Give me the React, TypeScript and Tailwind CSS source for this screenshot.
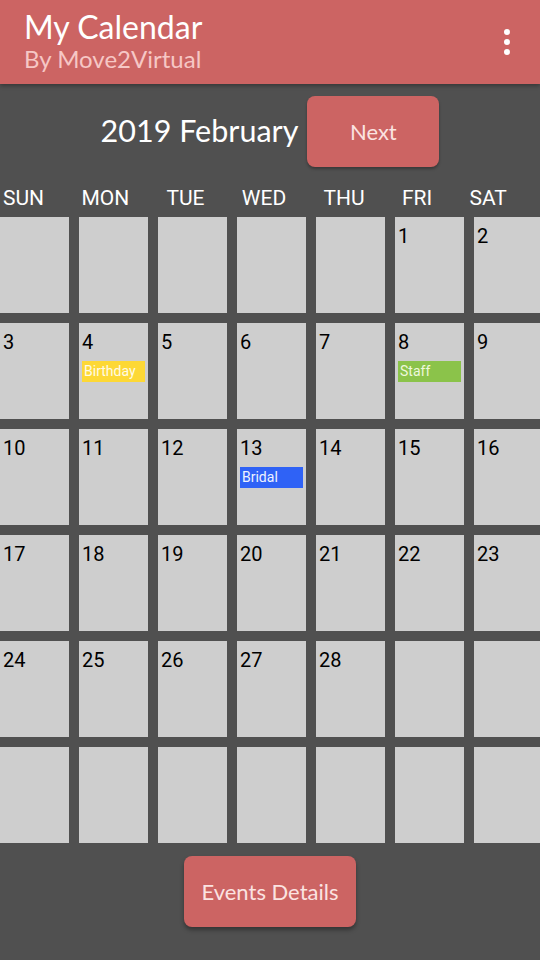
const DAYS = ['SUN', 'MON', 'TUE', 'WED', 'THU', 'FRI', 'SAT']

const EVENTS: Record<number, { label: string; bg: string; text: string }> = {
  4: { label: 'Birthday', bg: 'bg-[#fdd835]', text: 'text-[#fffbe6]' },
  8: { label: 'Staff', bg: 'bg-[#8bc34a]', text: 'text-[#eef8dc]' },
  13: { label: 'Bridal', bg: 'bg-[#2f62f6]', text: 'text-[#eef2ff]' },
}

// Feb 2019 starts on a Friday
const cells: (number | null)[] = Array.from({ length: 42 }, (_, i) => {
  const d = i - 4
  return d >= 1 && d <= 28 ? d : null
})

export default function App() {
  return (
    <div className="w-[540px] h-[960px] overflow-hidden bg-[#505050] flex flex-col" style={{ fontFamily: 'Lato, "Open Sans", sans-serif' }}>
      <header className="h-[84px] shrink-0 bg-[#cc6463] flex items-center justify-between pl-6 pr-7 shadow-[0_2px_4px_rgba(0,0,0,0.3)]">
        <div className="flex flex-col -mt-[3px]">
          <span className="text-[32px] leading-[36px] text-white">My Calendar</span>
          <span className="text-[24px] leading-[28px] text-[#f6c7c5]">By Move2Virtual</span>
        </div>
        <svg width="10" height="28" viewBox="0 0 10 28" className="fill-white">
          <circle cx="5" cy="4" r="3" />
          <circle cx="5" cy="14" r="3" />
          <circle cx="5" cy="24" r="3" />
        </svg>
      </header>

      <div className="flex items-center justify-center gap-[9px] pt-3">
        <span className="text-[30.5px] -mt-[2px] text-white">2019 February</span>
        <button className="w-[132px] h-[71px] rounded-lg bg-[#cc6463] text-[22px] text-[#fbe3e1] shadow-[0_2px_3px_rgba(0,0,0,0.3)]">
          Next
        </button>
      </div>

      <div className="flex gap-[37.3px] pl-[3px] pt-[19px] pb-[7px]" style={{ fontFamily: 'Roboto, sans-serif' }}>
        {DAYS.map(d => (
          <span key={d} className="text-[21px] leading-[24px] text-white">{d}</span>
        ))}
      </div>

      <div className="grid grid-cols-[repeat(7,69px)] auto-rows-[96px] gap-[10px]" style={{ fontFamily: 'Roboto, sans-serif' }}>
        {cells.map((d, i) => (
          <div key={i} className="bg-[#cecece] pt-[7px]">
            {d && <div className="pl-[3px] text-[20px] leading-[24px] text-black">{d}</div>}
            {d && EVENTS[d] && (
              <div className={`mx-[3px] mt-[7px] h-[21px] leading-[21px] pl-[2px] text-[14px] ${EVENTS[d].bg} ${EVENTS[d].text}`}>
                {EVENTS[d].label}
              </div>
            )}
          </div>
        ))}
      </div>

      <div className="flex justify-center mt-[13px]">
        <button className="w-[172px] h-[71px] rounded-lg bg-[#cc6463] text-[22px] text-[#fbe3e1] shadow-[0_3px_4px_rgba(0,0,0,0.35)]">
          Events Details
        </button>
      </div>
    </div>
  )
}
